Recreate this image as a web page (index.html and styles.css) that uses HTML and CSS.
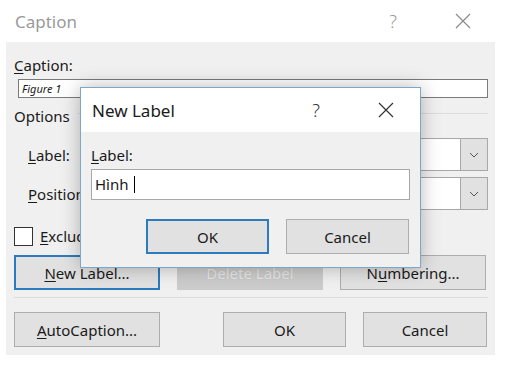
FILE: index.html
```html
<!DOCTYPE html>
<html lang="en">
<head>
    <meta charset="UTF-8">
    <title>Caption</title>
    <link rel="stylesheet" href="styles.css">
</head>
<body>
    <div class="dialog">
        <div class="titlebar">
            <span class="title">Caption</span>
            <span class="help">?</span>
            <svg class="close" width="16" height="16" viewBox="0 0 16 16"><path d="M1 1L15 15M15 1L1 15" stroke="#8a8a8a" stroke-width="1.2" fill="none"/></svg>
        </div>
        <div class="panel">
            <div class="caption-label"><u>C</u>aption:</div>
            <div class="caption-input">Figure 1</div>
            <div class="options"><span>Options</span><span class="rule"></span></div>
            <div class="field">
                <span class="field-label"><u>L</u>abel:</span>
                <div class="select"><span class="select-value"></span><span class="arrow"><svg width="10" height="6" viewBox="0 0 10 6"><path d="M1 1L5 5L9 1" stroke="#555" stroke-width="1" fill="none"/></svg></span></div>
            </div>
            <div class="field">
                <span class="field-label"><u>P</u>osition:</span>
                <div class="select"><span class="select-value"></span><span class="arrow"><svg width="10" height="6" viewBox="0 0 10 6"><path d="M1 1L5 5L9 1" stroke="#555" stroke-width="1" fill="none"/></svg></span></div>
            </div>
            <div class="check-row">
                <span class="checkbox"></span>
                <span class="check-text"><u>E</u>xclude label from caption</span>
            </div>
            <div class="button-row">
                <button class="btn default"><u>N</u>ew Label...</button>
                <button class="btn disabled">Delete Label</button>
                <button class="btn">N<u>u</u>mbering...</button>
            </div>
            <div class="separator"></div>
            <div class="button-row bottom">
                <button class="btn"><u>A</u>utoCaption...</button>
                <button class="btn narrow push">OK</button>
                <button class="btn narrow">Cancel</button>
            </div>
        </div>
    </div>

    <div class="popup">
        <div class="popup-title">
            <span class="popup-name">New Label</span>
            <span class="help">?</span>
            <svg class="close" width="16" height="16" viewBox="0 0 16 16"><path d="M1 1L15 15M15 1L1 15" stroke="#333" stroke-width="1.2" fill="none"/></svg>
        </div>
        <div class="popup-body">
            <div class="popup-label"><u>L</u>abel:</div>
            <div class="popup-input">Hình<span class="cursor"></span></div>
            <div class="popup-buttons">
                <button class="btn narrow default">OK</button>
                <button class="btn narrow">Cancel</button>
            </div>
        </div>
    </div>
</body>
</html>
```

FILE: styles.css
```css
body { margin: 0; background: #fff; font-family: "Noto Sans", "Open Sans", sans-serif; font-size: 14px; color: #1a1a1a; }
u { text-decoration-thickness: 1px; text-underline-offset: 2px; }

.dialog { width: 505px; height: 367px; }
.titlebar { height: 42px; display: flex; align-items: center; padding-left: 15px; }
.title { font-size: 17px; color: #9a9a9a; flex: 1; }
.titlebar .help { font-size: 18px; color: #9a9a9a; margin-right: 58px; font-weight: 300; }
.titlebar .close { margin-right: 34px; }

.panel { margin: 0 10px 0 6px; height: 313px; background: #f0f0f0; padding: 0 7px 0 8px; box-sizing: border-box; display: flex; flex-direction: column; }
.caption-label { margin-top: 12px; height: 22px; line-height: 22px; font-size: 15px; }
.caption-input { margin: 3px 0 0 4px; height: 19px; box-sizing: border-box; border: 1px solid #7a7a7a; background: #fff; font-size: 11px; font-style: italic; line-height: 17px; padding-left: 3px; }
.options { display: flex; align-items: center; margin-top: 6px; height: 24px; font-size: 15px; }
.options .rule { flex: 1; height: 1px; background: #dcdcdc; margin: -6px 0 0 8px; }

.field { display: flex; align-items: center; margin-top: 10px; height: 33px; }
.field + .field { margin-top: 6px; }
.field-label { width: 86px; padding-left: 14px; font-size: 15px; }
.select { flex: 1; display: flex; height: 33px; box-sizing: border-box; border: 1px solid #a8a8a8; background: #fff; }
.select-value { flex: 1; }
.arrow { width: 26px; background: #e1e1e1; border-left: 1px solid #a8a8a8; display: flex; align-items: center; justify-content: center; }

.check-row { display: flex; align-items: center; gap: 7px; margin-top: 16px; height: 20px; font-size: 15px; }
.checkbox { width: 19px; height: 19px; box-sizing: border-box; border: 1px solid #333; background: #fff; }
.check-text { white-space: nowrap; }

.button-row { display: flex; gap: 17px; margin-top: 9px; }
.btn { width: 146px; height: 35px; box-sizing: border-box; border: 1px solid #adadad; background: #e1e1e1; font-family: inherit; font-size: 15px; color: #1a1a1a; padding: 0; }
.btn.default { border: 2px solid #2b7bbd; }
.btn.disabled { background: #cccccc; border-color: #cccccc; color: #e9e9e9; text-shadow: 0 0 1px #b5b5b5; }
.btn.narrow { width: 123px; }
.separator { height: 1px; background: #dcdcdc; margin-top: 7px; }
.button-row.bottom { margin-top: 14px; }
.btn.push { margin-left: 46px; }
.bottom .btn.narrow:last-child { width: 124px; }

.popup { position: absolute; left: 80px; top: 87px; width: 341px; height: 181px; box-sizing: border-box; border: 1px solid #7ea6c6; background: #f0f0f0; box-shadow: 0 0 18px rgba(0,0,0,0.28); }
.popup-title { height: 44px; background: #fff; display: flex; align-items: center; padding-left: 11px; }
.popup-name { flex: 1; font-size: 17px; color: #1a1a1a; }
.popup-title .help { font-size: 18px; color: #333; margin-right: 58px; font-weight: 300; }
.popup-title .close { margin-right: 26px; }
.popup-body { padding: 12px 10px 0 10px; }
.popup-label { font-size: 15px; height: 22px; line-height: 22px; }
.popup-input { margin-top: 3px; height: 31px; box-sizing: border-box; border: 1px solid #a8a8a8; background: #fff; padding-left: 3px; font-size: 15px; line-height: 29px; display: flex; align-items: center; }
.cursor { width: 1px; height: 17px; background: #000; margin-left: 5px; }
.popup-buttons { display: flex; gap: 17px; margin: 19px 0 0 55px; }
```
